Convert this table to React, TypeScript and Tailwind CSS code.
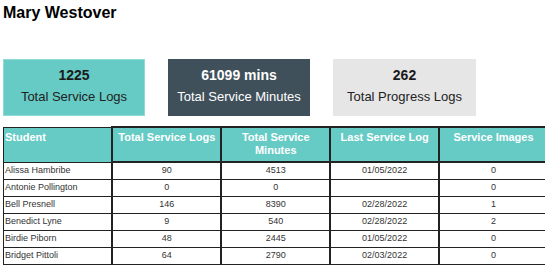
const rows = [
  { name: "Alissa Hambribe", logs: "90", minutes: "4513", last: "01/05/2022", images: "0" },
  { name: "Antonie Pollington", logs: "0", minutes: "0", last: "", images: "0" },
  { name: "Bell Presnell", logs: "146", minutes: "8390", last: "02/28/2022", images: "1" },
  { name: "Benedict Lyne", logs: "9", minutes: "540", last: "02/28/2022", images: "2" },
  { name: "Birdie Piborn", logs: "48", minutes: "2445", last: "01/05/2022", images: "0" },
  { name: "Bridget Pittoli", logs: "64", minutes: "2790", last: "02/03/2022", images: "0" },
];

const headers = ["Total Service Logs", "Total Service Minutes", "Last Service Log", "Service Images"];

export default function App() {
  return (
    <div className="w-[545px] h-[266px] overflow-hidden bg-white text-black font-['Liberation_Sans',Arial,sans-serif]">
      <h1 className="pl-[3px] pt-[3px] text-[16px] leading-[19px] font-bold">Mary Westover</h1>

      {/* Summary cards */}
      <div className="flex gap-[23px] pl-[3px] mt-[37px]">
        <div className="w-[142px] h-[57px] bg-[#66cbc5] border border-[#8fdcd6] flex flex-col items-center pt-[6px]">
          <div className="text-[14px] leading-[18px] font-bold text-[#1a1a1a]">1225</div>
          <div className="mt-[4px] text-[13px] leading-[18px] text-[#222]">Total Service Logs</div>
        </div>
        <div className="w-[142px] h-[57px] bg-[#3f505b] flex flex-col items-center pt-[7px]">
          <div className="text-[14px] leading-[18px] font-bold text-white">61099 mins</div>
          <div className="mt-[4px] text-[13px] leading-[18px] text-white">Total Service Minutes</div>
        </div>
        <div className="w-[143px] h-[57px] bg-[#e6e6e7] flex flex-col items-center pt-[7px]">
          <div className="text-[14px] leading-[18px] font-bold text-[#1a1a1a]">262</div>
          <div className="mt-[4px] text-[13px] leading-[18px] text-[#222]">Total Progress Logs</div>
        </div>
      </div>

      {/* Student table */}
      <table className="ml-[3px] mt-[10px] w-[546px] table-fixed border-collapse">
        <thead>
          <tr className="bg-[#66cbc5] text-white h-[35px]">
            <th className="border border-[#222] align-top text-left font-bold text-[11px] leading-[13px] px-[1px] pt-[3px]">
              Student
            </th>
            {headers.map((h) => (
              <th
                key={h}
                className="border-2 border-[#222] align-top text-center font-bold text-[11px] leading-[13px] px-[2px] pt-[3px]"
              >
                {h}
              </th>
            ))}
          </tr>
        </thead>
        <tbody className="text-[9px] text-[#333]">
          {rows.map((r) => (
            <tr key={r.name} className="h-[17px]">
              <td className="border border-[#222] text-left px-[1px] leading-[11px]">{r.name}</td>
              <td className="border border-[#222] border-x-2 text-center leading-[11px]">{r.logs}</td>
              <td className="border border-[#222] border-x-2 text-center leading-[11px]">{r.minutes}</td>
              <td className="border border-[#222] border-x-2 text-center leading-[11px]">{r.last}</td>
              <td className="border border-[#222] border-x-2 text-center leading-[11px]">{r.images}</td>
            </tr>
          ))}
        </tbody>
      </table>
    </div>
  );
}
